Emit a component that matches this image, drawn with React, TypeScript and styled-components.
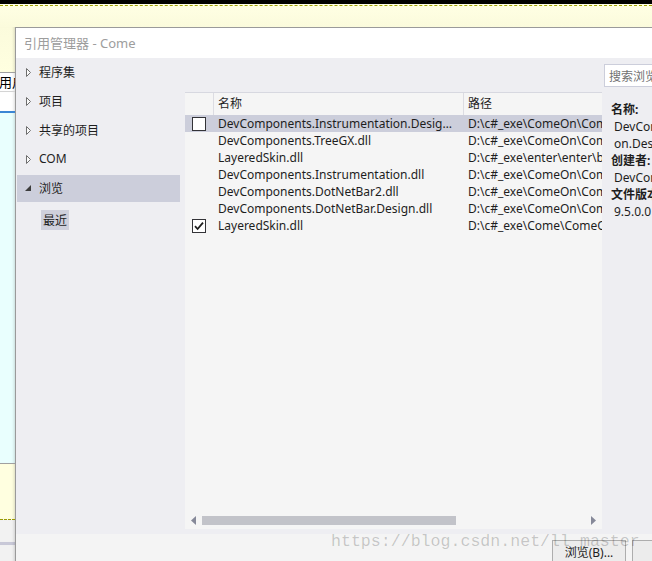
import React from "react";
import styled, { createGlobalStyle } from "styled-components";

const Global = createGlobalStyle`
  html, body { margin: 0; padding: 0; overflow: hidden; }
  body {
    width: 652px; height: 561px;
    font-family: "Noto Sans", "Noto Sans CJK SC", sans-serif;
    font-size: 12px; color: #1e1e1e;
  }
  #root { width: 652px; height: 561px; }
`;

const Screen = styled.div`
  position: relative;
  width: 652px; height: 561px; overflow: hidden;
  display: flex; flex-direction: column;
  background: #ffffe0;
`;
const TopBlack = styled.div`height: 4px; flex: none; background: #000;`;
const YellowBand = styled.div`
  height: 23px; flex: none; box-sizing: border-box; padding-top: 1px;
  background: linear-gradient(#ffffe4, #fbfbdc);
`;
const Dashed = styled.div`border-top: 1px dashed #a3a300;`;

const MainRow = styled.div`flex: 1; min-height: 0; display: flex;`;

const Strip = styled.div`
  width: 15px; flex: none; display: flex; flex-direction: column; overflow: hidden;
`;
const StripSeg = styled.div<{ $h?: number; $bg: string; $top?: string; $grow?: boolean }>`
  flex: ${(p) => (p.$grow ? "1" : "none")};
  box-sizing: border-box;
  height: ${(p) => (p.$h !== undefined ? `${p.$h}px` : "auto")};
  background: ${(p) => p.$bg};
  border-top: ${(p) => p.$top ?? "none"};
  box-shadow: inset -3px 0 3px -2px rgba(0, 0, 0, 0.15);
  overflow: hidden; white-space: nowrap;
  font-family: "Noto Sans CJK SC", sans-serif; font-size: 13px; line-height: 18px; color: #000;
  text-indent: -1px;
`;

const Dialog = styled.div`
  flex: 1; min-width: 0; overflow: hidden;
  display: flex; flex-direction: column;
  border-left: 1px solid #9a9a9a; border-top: 1px solid #9a9a9a;
  background: #eeeef2;
`;
const TitleBar = styled.div`
  height: 30px; flex: none; background: #fff; box-sizing: border-box;
  display: flex; align-items: center; padding: 0 0 2px 8px;
  font-family: "Noto Sans", "Noto Sans CJK SC", sans-serif;
  font-size: 13px; color: #9d9d9d; white-space: nowrap;
`;
const Body = styled.div`
  width: 760px; height: 476px; flex: none; display: flex; background: #eeeef2;
`;

const LeftPanel = styled.div`
  width: 169px; flex: none; padding-top: 1px; box-sizing: border-box;
  display: flex; flex-direction: column;
`;
const TreeItem = styled.div<{ $selected?: boolean }>`
  height: 27px; width: 163px; margin: 0 0 2px 1px; flex: none;
  display: flex; align-items: center; padding: 0 0 2px 7px; box-sizing: border-box;
  background: ${(p) => (p.$selected ? "#cccedb" : "transparent")};
  white-space: nowrap;
`;
const ArrowBox = styled.span`width: 15px; flex: none; display: flex; align-items: center; padding-top: 1px;`;
const SubItem = styled.div`
  margin: 6px 0 0 25px; align-self: flex-start;
  height: 20px; padding: 0 2px 1px; box-sizing: border-box; display: flex; align-items: center;
  background: #cfd0dc;
`;

const MidCol = styled.div`
  width: 417px; flex: none; display: flex; flex-direction: column;
`;
const MidSpacer = styled.div`height: 34px; flex: none;`;
const TablePanel = styled.div`
  height: 437px; flex: none; box-sizing: border-box;
  background: #f5f5f5; border-top: 1px solid #d7d8e0;
  display: flex; flex-direction: column; overflow: hidden;
`;
const HeaderRow = styled.div`
  height: 22px; flex: none; display: grid;
  grid-template-columns: 28px 250px 1fr; align-items: stretch;
`;
const HeadCell = styled.div<{ $divider?: boolean }>`
  border-left: ${(p) => (p.$divider ? "1px solid #dcdce2" : "none")};
  display: flex; align-items: center; padding: 0 0 2px 4px;
  white-space: nowrap; overflow: hidden;
`;
const Rows = styled.div`flex: 1; min-height: 0;`;
const Row = styled.div<{ $selected?: boolean }>`
  height: 17px; display: grid; grid-template-columns: 28px 250px 1fr;
  align-items: center;
  background: ${(p) => (p.$selected ? "#cccedb" : "transparent")};
`;
const CheckCell = styled.div`height: 17px; display: flex; align-items: center; padding-left: 7px;`;
const CheckBox = styled.span`
  width: 14px; height: 14px; box-sizing: border-box;
  border: 1px solid #333337; background: #fff;
  display: flex; align-items: center; justify-content: center;
`;
const TextCell = styled.div<{ $ellipsis?: boolean }>`
  padding-left: 5px; white-space: nowrap; overflow: hidden; line-height: 17px;
  text-overflow: ${(p) => (p.$ellipsis ? "ellipsis" : "clip")};
  padding-right: ${(p) => (p.$ellipsis ? "4px" : "0")};
`;
const HScroll = styled.div`
  height: 9px; flex: none; margin-bottom: 4px;
  display: flex; align-items: center; padding: 0 6px;
`;
const Thumb = styled.div`width: 254px; height: 9px; margin-left: 6px; background: #c2c3c9;`;
const ScrollEnd = styled.span`margin-left: auto; display: flex;`;

const RightCol = styled.div`
  width: 170px; flex: none; padding-left: 2px; display: flex; flex-direction: column;
`;
const Search = styled.div`
  margin-top: 6px; height: 23px; width: 150px; box-sizing: border-box;
  border: 1px solid #cccedb; background: #fff;
  display: flex; align-items: center; padding-left: 4px;
  color: #717171; white-space: nowrap;
`;
const Details = styled.div`
  margin-top: 14px; padding-left: 7px; display: flex; flex-direction: column;
`;
const DetailLabel = styled.div`font-weight: 700; height: 17px; line-height: 17px; white-space: nowrap;`;
const DetailValue = styled.div`height: 17px; line-height: 17px; padding-left: 3px; white-space: nowrap;`;

const BottomBar = styled.div`
  flex: 1; background: #f4f4f4; display: flex; gap: 6px;
  padding: 6px 0 0 536px; box-sizing: border-box;
`;
const Button = styled.div<{ $w: number }>`
  width: ${(p) => p.$w}px; height: 23px; flex: none; box-sizing: border-box;
  border: 1px solid #adadad; background: #ececec;
  display: flex; align-items: center; justify-content: center;
  white-space: nowrap;
`;

const Watermark = styled.div`
  position: absolute; left: 331px; top: 531px;
  font-family: "Liberation Mono", "DejaVu Sans Mono", monospace;
  font-size: 16.6px; line-height: 22px; color: rgba(0, 0, 0, 0.2);
  white-space: nowrap; pointer-events: none;
`;

const Collapsed = () => (
  <svg width="15" height="9" viewBox="0 0 15 9">
    <path d="M2.5 0.5 L6.5 4.5 L2.5 8.5 Z" fill="#fafafa" stroke="#6e6e6e" strokeWidth="1" />
  </svg>
);
const Expanded = () => (
  <svg width="15" height="8" viewBox="0 0 15 8">
    <path d="M7 1 L7 7 L1 7 Z" fill="#3c3c3c" />
  </svg>
);
const Tick = () => (
  <svg width="12" height="12" viewBox="0 0 12 12">
    <path d="M2 6.2 L4.6 9 L10 2.6" fill="none" stroke="#1e1e1e" strokeWidth="1.8" />
  </svg>
);
const LeftArrow = () => (
  <svg width="5" height="9" viewBox="0 0 5 9">
    <path d="M5 0 L0 4.5 L5 9 Z" fill="#868999" />
  </svg>
);
const RightArrow = () => (
  <svg width="5" height="9" viewBox="0 0 5 9">
    <path d="M0 0 L5 4.5 L0 9 Z" fill="#868999" />
  </svg>
);

const tree = [
  { label: "程序集" },
  { label: "项目" },
  { label: "共享的项目" },
  { label: "COM" },
  { label: "浏览", open: true },
];

const rows = [
  { name: "DevComponents.Instrumentation.Design.dll", path: "D:\\c#_exe\\ComeOn\\ComeOn\\bin\\Debug", check: false, selected: true },
  { name: "DevComponents.TreeGX.dll", path: "D:\\c#_exe\\ComeOn\\ComeOn\\bin\\Debug" },
  { name: "LayeredSkin.dll", path: "D:\\c#_exe\\enter\\enter\\bin\\Debug" },
  { name: "DevComponents.Instrumentation.dll", path: "D:\\c#_exe\\ComeOn\\ComeOn\\bin\\Debug" },
  { name: "DevComponents.DotNetBar2.dll", path: "D:\\c#_exe\\ComeOn\\ComeOn\\bin\\Debug" },
  { name: "DevComponents.DotNetBar.Design.dll", path: "D:\\c#_exe\\ComeOn\\ComeOn\\bin\\Debug" },
  { name: "LayeredSkin.dll", path: "D:\\c#_exe\\Come\\ComeOn\\bin\\Debug", check: true },
];

export default function App() {
  return (
    <Screen>
      <Global />
      <TopBlack />
      <YellowBand>
        <Dashed />
      </YellowBand>
      <MainRow>
        <Strip>
          <StripSeg $h={45} $bg="linear-gradient(#fbfbdc, #ffffe0)" />
          <StripSeg $h={19} $bg="#fff" $top="1px solid #a0a0a0">用户</StripSeg>
          <StripSeg $h={20} $bg="#fff" $top="1px solid #d4d4d4" />
          <StripSeg $h={352} $bg="#e9fffe" $top="2px solid #3a86d4" />
          <StripSeg $h={56} $bg="#ffffe0" $top="1px solid #a0a0a0" />
          <StripSeg $h={23} $bg="#f2f2f2" $top="1px dashed #9a9a00" />
          <StripSeg $h={3} $bg="#c9c9d8" />
          <StripSeg $grow $bg="#f2f2f2" />
        </Strip>
        <Dialog>
          <TitleBar>引用管理器 - Come</TitleBar>
          <Body>
            <LeftPanel>
              {tree.map((t) => (
                <TreeItem key={t.label} $selected={t.open}>
                  <ArrowBox>{t.open ? <Expanded /> : <Collapsed />}</ArrowBox>
                  {t.label}
                </TreeItem>
              ))}
              <SubItem>最近</SubItem>
            </LeftPanel>
            <MidCol>
              <MidSpacer />
              <TablePanel>
                <HeaderRow>
                  <HeadCell />
                  <HeadCell $divider>名称</HeadCell>
                  <HeadCell $divider>路径</HeadCell>
                </HeaderRow>
                <Rows>
                  {rows.map((r, i) => (
                    <Row key={i} $selected={r.selected}>
                      <CheckCell>
                        {r.check !== undefined && <CheckBox>{r.check && <Tick />}</CheckBox>}
                      </CheckCell>
                      <TextCell $ellipsis>{r.name}</TextCell>
                      <TextCell>{r.path}</TextCell>
                    </Row>
                  ))}
                </Rows>
                <HScroll>
                  <LeftArrow />
                  <Thumb />
                  <ScrollEnd>
                    <RightArrow />
                  </ScrollEnd>
                </HScroll>
              </TablePanel>
            </MidCol>
            <RightCol>
              <Search>搜索浏览(Ctrl+E)</Search>
              <Details>
                <DetailLabel>名称:</DetailLabel>
                <DetailValue>DevComponents.Instrumentati</DetailValue>
                <DetailValue>on.Design.dll</DetailValue>
                <DetailLabel>创建者:</DetailLabel>
                <DetailValue>DevComponents</DetailValue>
                <DetailLabel>文件版本:</DetailLabel>
                <DetailValue>9.5.0.0</DetailValue>
              </Details>
            </RightCol>
          </Body>
          <BottomBar>
            <Button $w={74}>浏览(B)...</Button>
            <Button $w={74}>确定</Button>
          </BottomBar>
        </Dialog>
      </MainRow>
      <Watermark>https://blog.csdn.net/ll_master</Watermark>
    </Screen>
  );
}
